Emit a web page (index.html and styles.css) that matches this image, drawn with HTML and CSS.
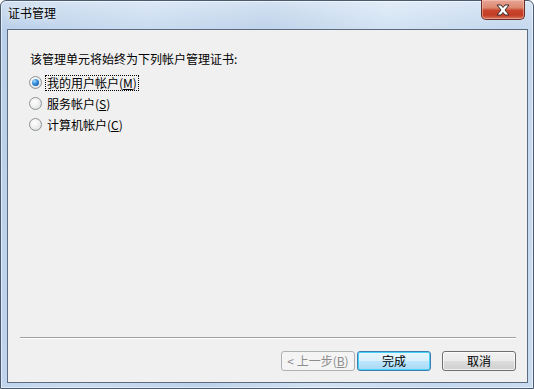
FILE: index.html
```html
<!DOCTYPE html>
<html lang="zh-CN">
<head>
<meta charset="utf-8">
<title>证书管理</title>
<link rel="stylesheet" href="styles.css">
</head>
<body>
<div class="window">
  <div class="titlebar">
    <span class="title">证书管理</span>
    <span class="close">
      <svg width="18" height="12" viewBox="0 0 18 12">
        <path d="M3 1 H7 L9 3.5 L11 1 H15 L11 6 L15 11 H11 L9 8.5 L7 11 H3 L7 6 Z" fill="#fff" stroke="#3a2a2a" stroke-width="1" stroke-linejoin="round"/>
      </svg>
    </span>
  </div>
  <div class="client">
    <div class="content">
      <p class="intro">该管理单元将始终为下列帐户管理证书:</p>
      <div class="options">
        <label class="option"><span class="radio checked"></span><span class="label focus">我的用户帐户(<u>M</u>)</span></label>
        <label class="option"><span class="radio"></span><span class="label">服务帐户(<u>S</u>)</span></label>
        <label class="option"><span class="radio"></span><span class="label">计算机帐户(<u>C</u>)</span></label>
      </div>
    </div>
    <div class="footer">
      <div class="separator"></div>
      <div class="buttons">
        <button class="btn disabled">&lt; 上一步(<u>B</u>)</button>
        <button class="btn default">完成</button>
        <button class="btn cancel">取消</button>
      </div>
    </div>
  </div>
</div>
</body>
</html>
```
FILE: styles.css
```css
* { box-sizing: border-box; }
html, body {
  margin: 0;
  padding: 0;
  width: 534px;
  height: 389px;
  overflow: hidden;
  background: #ffffff;
}
body {
  font-family: "Noto Sans CJK SC", "Liberation Sans", sans-serif;
  font-size: 12px;
  color: #000;
}
.window {
  width: 534px;
  height: 389px;
  display: flex;
  flex-direction: column;
  border: 1px solid #4b5b6f;
  border-radius: 6px 6px 0 0;
  background:
    linear-gradient(180deg, rgba(255,255,255,0.35) 0, rgba(255,255,255,0) 30px),
    linear-gradient(100deg, #b8cfe9 0%, #c9dbf0 25%, #bdd2ea 45%, #d2e2f3 65%, #c3d7ee 85%, #cadcf0 100%);
  box-shadow: inset 0 0 0 1px rgba(255,255,255,0.55);
}
.titlebar {
  height: 28px;
  display: flex;
  align-items: flex-start;
  justify-content: space-between;
  padding: 0 8px 0 7px;
  flex: none;
}
.title {
  margin-top: 4px;
  line-height: 16px;
  color: #000;
  text-shadow: 0 0 6px rgba(255,255,255,0.9);
}
.close {
  width: 44px;
  height: 20px;
  margin-top: -1px;
  display: flex;
  align-items: center;
  justify-content: center;
  border: 1px solid #6a2e24;
  border-top: none;
  border-radius: 0 0 5px 5px;
  background: linear-gradient(180deg, #e7a595 0%, #dc8870 40%, #c8452c 55%, #c43d25 80%, #d6765c 100%);
  box-shadow: inset 0 0 0 1px rgba(255,210,200,0.45);
}
.close svg { display: block; margin-top: 1px; }
.client {
  flex: 1;
  margin: 0 5px 5px 6px;
  border: 1px solid #5c6b7e;
  background: #f0f0f0;
  display: flex;
  flex-direction: column;
}
.content {
  padding: 21px 0 0 22px;
}
.intro {
  margin: 0;
  line-height: 16px;
}
.options {
  margin-top: 5px;
  margin-left: -1px;
}
.option {
  display: flex;
  align-items: center;
  height: 21px;
}
.radio {
  width: 13px;
  height: 13px;
  border-radius: 50%;
  border: 1px solid #8f9397;
  background: radial-gradient(circle at 40% 35%, #ffffff 0%, #f0f0f0 45%, #d4d6d8 100%);
  display: flex;
  align-items: center;
  justify-content: center;
  margin-right: 3px;
  flex: none;
}
.radio.checked::after {
  content: "";
  width: 7px;
  height: 7px;
  border-radius: 50%;
  background: radial-gradient(circle at 35% 30%, #a8dcff 0%, #2f8ad8 45%, #14508f 100%);
}
.label {
  line-height: 14px;
  padding: 0 1px;
  border: 1px solid transparent;
}
.label.focus {
  border: 1px dotted #000;
}
.footer {
  margin-top: auto;
  padding: 0 11px 11px 12px;
}
.separator {
  height: 2px;
  border-top: 1px solid #a0a0a0;
  border-bottom: 1px solid #ffffff;
}
.buttons {
  display: flex;
  justify-content: flex-end;
  margin-top: 12px;
}
.btn {
  width: 74px;
  height: 20px;
  font-family: inherit;
  font-size: 12px;
  line-height: 16px;
  padding: 0;
  color: #000;
  border: 1px solid #707070;
  border-radius: 3px;
  background: linear-gradient(180deg, #f2f2f2 0%, #ebebeb 50%, #dddddd 51%, #cfcfcf 100%);
  box-shadow: inset 0 0 0 1px rgba(255,255,255,0.7);
}
.btn.disabled {
  color: #8d8d8d;
  border-color: #adb2b5;
  background: #f4f4f4;
  box-shadow: none;
}
.btn.default {
  margin-left: 2px;
  border-color: #3c7fb1;
  background: linear-gradient(180deg, #eaf6fd 0%, #d9f0fc 50%, #bee6fd 51%, #a7d9f5 100%);
  box-shadow: inset 0 0 0 1px #48d0f8;
}
.btn.cancel {
  margin-left: 11px;
}
.btn u { text-decoration: underline; }
```
